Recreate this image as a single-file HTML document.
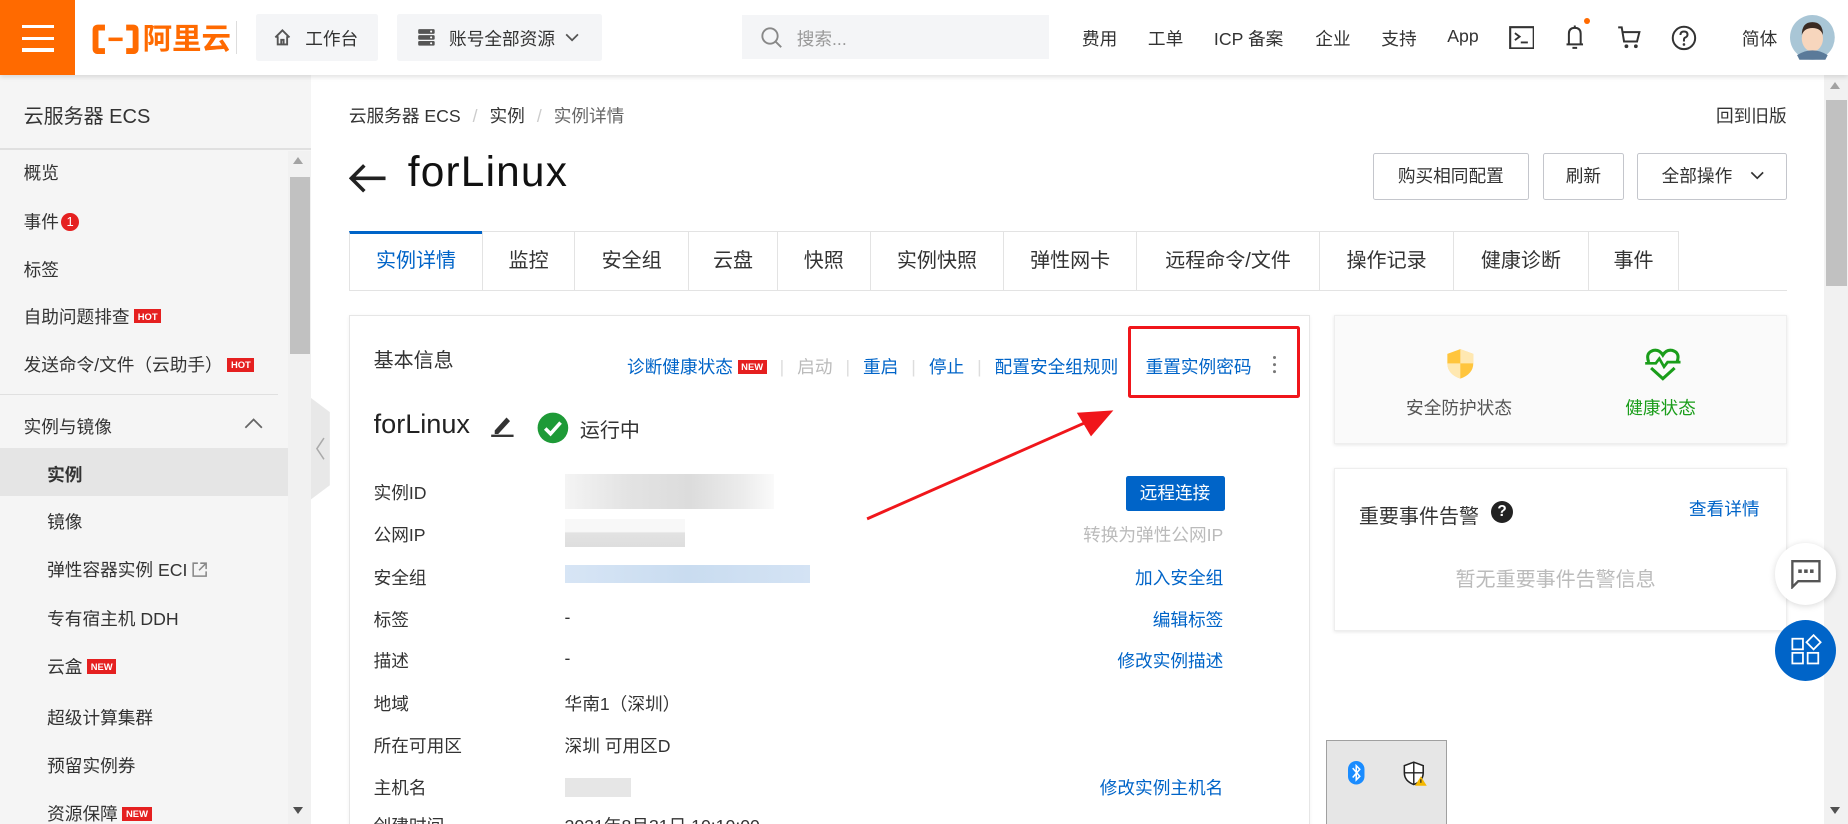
<!DOCTYPE html>
<html><head><meta charset="utf-8"><style>
html,body{margin:0;padding:0;overflow:hidden;background:#fff}
#w{position:relative;width:1568px;height:699px;zoom:1.178571;overflow:hidden;font-family:"Liberation Sans","Noto Sans CJK SC",sans-serif;color:#333;font-size:15px}
.a{position:absolute;white-space:nowrap}
.tab{position:absolute;top:196px;height:50px;border:1px solid #e3e3e3;border-bottom:none;box-sizing:border-box;text-align:center;line-height:50px;font-size:17px;color:#333;background:#fff}
.side{position:absolute;left:20px;font-size:15px;color:#333}
.lab{position:absolute;left:317px;font-size:15px;color:#333}
.rl{position:absolute;right:530px;font-size:15px;color:#0064c8;text-align:right}
.hot{display:inline-block;background:#e52020;color:#fff;font-size:8px;font-weight:bold;padding:1px 3px;vertical-align:3px;margin-left:4px;line-height:10px}
.btn{position:absolute;top:130px;height:40px;border:1px solid #c4c6cc;border-radius:2px;box-sizing:border-box;line-height:38px;text-align:center;font-size:15px;color:#333;background:#fff}
.blur{position:absolute;background:#e8e8e8}
.sep{color:#ddd;margin:0 11px}
</style></head><body><div id="w">
<div class="a" style="left:0;top:0;width:1568px;height:64px;background:#fff;box-shadow:0 2px 4px rgba(0,0,0,.12);z-index:2">
 <div class="a" style="left:0;top:0;width:64px;height:64px;background:#ff6a00">
  <div class="a" style="left:19px;top:21px;width:27px;height:3px;background:#fff"></div>
  <div class="a" style="left:19px;top:31px;width:27px;height:3px;background:#fff"></div>
  <div class="a" style="left:19px;top:41px;width:27px;height:3px;background:#fff"></div>
 </div>
 <svg class="a" style="left:78px;top:20px" width="40" height="26" viewBox="0 0 40 26"><path d="M11 3H5Q3 3 3 5V21Q3 23 5 23H11M29 3H35Q37 3 37 5V21Q37 23 35 23H29" fill="none" stroke="#ff6a00" stroke-width="5"/><rect x="14" y="11.5" width="12" height="3" fill="#ff6a00"/></svg>
 <div class="a" style="left:121px;top:14px;font-size:25px;font-weight:bold;color:#ff6a00">阿里云</div>
 <div class="a" style="left:200px;top:18px;width:1px;height:28px;background:#ddd"></div>
 <div class="a" style="left:217px;top:12px;width:104px;height:40px;background:#f4f5f7;border-radius:2px"></div>
 <svg class="a" style="left:232px;top:24px" width="16" height="16" viewBox="0 0 16 16"><path d="M2 8L8 2L14 8M4 7V14H12V7M7 14V10H9V14" fill="none" stroke="#555" stroke-width="1.6"/></svg>
 <div class="a" style="left:259px;top:22px;font-size:15px;color:#333">工作台</div>
 <div class="a" style="left:337px;top:12px;width:174px;height:40px;background:#f4f5f7;border-radius:2px"></div>
 <svg class="a" style="left:354px;top:24px" width="16" height="16" viewBox="0 0 16 16"><rect x="1" y="1" width="14" height="4" rx="1" fill="#555"/><rect x="1" y="6" width="14" height="4" rx="1" fill="#555"/><rect x="1" y="11" width="14" height="4" rx="1" fill="#555"/><circle cx="12" cy="3" r=".9" fill="#fff"/><circle cx="12" cy="8" r=".9" fill="#fff"/><circle cx="12" cy="13" r=".9" fill="#fff"/></svg>
 <div class="a" style="left:381px;top:22px;font-size:15px;color:#333">账号全部资源</div>
 <svg class="a" style="left:479px;top:27px" width="12" height="10" viewBox="0 0 12 10"><path d="M1 2L6 7L11 2" fill="none" stroke="#555" stroke-width="1.5"/></svg>
 <div class="a" style="left:630px;top:13px;width:260px;height:37px;background:#f4f5f7"></div>
 <svg class="a" style="left:645px;top:22px" width="20" height="20" viewBox="0 0 20 20"><circle cx="8.5" cy="8.5" r="6.5" fill="none" stroke="#888" stroke-width="1.6"/><path d="M13.5 13.5L18 18" stroke="#888" stroke-width="1.6"/></svg>
 <div class="a" style="left:676px;top:22px;font-size:15px;color:#999">搜索...</div>
 <div class="a" style="left:918px;top:22px;font-size:15px">费用</div>
 <div class="a" style="left:974px;top:22px;font-size:15px">工单</div>
 <div class="a" style="left:1030px;top:22px;font-size:15px">ICP 备案</div>
 <div class="a" style="left:1116px;top:22px;font-size:15px">企业</div>
 <div class="a" style="left:1172px;top:22px;font-size:15px">支持</div>
 <div class="a" style="left:1228px;top:22px;font-size:15px">App</div>
 <svg class="a" style="left:1280px;top:22px" width="22" height="20" viewBox="0 0 22 20"><rect x="1" y="1" width="20" height="18" fill="none" stroke="#333" stroke-width="1.8"/><path d="M5 6L9 9L5 12M10 14H16" fill="none" stroke="#333" stroke-width="1.6"/></svg>
 <svg class="a" style="left:1326px;top:19px" width="20" height="24" viewBox="0 0 20 24"><path d="M5 19V10Q5 5 10 5Q15 5 15 10V19ZM3 19H17M10 3V5M8 22H12" fill="none" stroke="#333" stroke-width="1.7"/></svg>
 <div class="a" style="left:1344px;top:15px;width:5px;height:5px;border-radius:50%;background:#ff6a00"></div>
 <svg class="a" style="left:1372px;top:21px" width="22" height="22" viewBox="0 0 22 22"><path d="M1 2H4L6 14H17L19 6H5" fill="none" stroke="#333" stroke-width="1.7"/><circle cx="8" cy="18" r="1.6" fill="#333"/><circle cx="16" cy="18" r="1.6" fill="#333"/></svg>
 <svg class="a" style="left:1418px;top:21px" width="22" height="22" viewBox="0 0 22 22"><circle cx="11" cy="11" r="9.5" fill="none" stroke="#333" stroke-width="1.7"/><path d="M8 8.5Q8 5.5 11 5.5Q14 5.5 14 8.2Q14 10 11.5 11Q11 11.3 11 13V14" fill="none" stroke="#333" stroke-width="1.7"/><circle cx="11" cy="16.5" r="1.1" fill="#333"/></svg>
 <div class="a" style="left:1478px;top:22px;font-size:15px">简体</div>
 <svg class="a" style="left:1519px;top:13px" width="38" height="38" viewBox="0 0 38 38"><circle cx="19" cy="19" r="19" fill="#a9c6d6"/><ellipse cx="19" cy="20" rx="9" ry="11" fill="#f7d6bd"/><path d="M10 17Q10 6 19 6Q28 6 28 17Q26 11 19 11Q12 11 10 17Z" fill="#3a2a22"/><path d="M6 34Q19 26 32 34L30 38H8Z" fill="#5a7a99"/></svg>
</div>
<div class="a" style="left:0;top:64px;width:264px;height:635px;background:#f5f5f5"></div>
<div class="a" style="left:20px;top:85px;font-size:17px;color:#333">云服务器 ECS</div>
<div class="a" style="left:0;top:126px;width:264px;height:1px;background:#e0e0e0"></div>
<div class="a" style="left:244px;top:128px;width:20px;height:571px;background:#f1f1f1"></div>
<div class="a" style="left:246px;top:150px;width:17px;height:150px;background:#c1c1c1"></div>
<div class="a" style="left:249px;top:133px;width:0;height:0;border:5px solid transparent;border-bottom:6px solid #a3a3a3;border-top:none"></div>
<div class="a" style="left:249px;top:685px;width:0;height:0;border:5px solid transparent;border-top:6px solid #505050;border-bottom:none"></div>
<div class="side" style="top:136px">概览</div>
<div class="side" style="top:177px">事件<span style="display:inline-block;width:15px;height:15px;border-radius:50%;background:#e52020;color:#fff;font-size:11px;text-align:center;line-height:15px;margin-left:2px;vertical-align:1px">1</span></div>
<div class="side" style="top:218px">标签</div>
<div class="side" style="top:258px">自助问题排查<span class="hot">HOT</span></div>
<div class="side" style="top:299px">发送命令/文件（云助手）<span class="hot">HOT</span></div>
<div class="a" style="left:0;top:334px;width:236px;height:1px;background:#e0e0e0"></div>
<div class="side" style="top:351px">实例与镜像</div>
<svg class="a" style="left:206px;top:353px" width="18" height="12" viewBox="0 0 18 12"><path d="M2 10L9 3L16 10" fill="none" stroke="#666" stroke-width="1.5"/></svg>
<div class="a" style="left:0;top:380px;width:244px;height:41px;background:#e5e5e5"></div>
<div class="side" style="top:392px;left:40px;font-weight:bold">实例</div>
<div class="side" style="top:432px;left:40px">镜像</div>
<div class="side" style="top:473px;left:40px">弹性容器实例 ECI <svg width="13" height="13" viewBox="0 0 13 13" style="vertical-align:-1px"><path d="M5 1H1V12H12V8M7 1H12V6M12 1L6 7" fill="none" stroke="#888" stroke-width="1.3"/></svg></div>
<div class="side" style="top:514px;left:40px">专有宿主机 DDH</div>
<div class="side" style="top:555px;left:40px">云盒<span class="hot">NEW</span></div>
<div class="side" style="top:598px;left:40px">超级计算集群</div>
<div class="side" style="top:639px;left:40px">预留实例券</div>
<div class="side" style="top:680px;left:40px">资源保障<span class="hot">NEW</span></div>
<svg class="a" style="left:264px;top:338px" width="18" height="86" viewBox="0 0 18 86"><path d="M0 0L16 12V74L0 86Z" fill="#e8e8e8"/><path d="M11 34L5 43L11 52" fill="none" stroke="#aaa" stroke-width="1.3"/></svg>
<div class="a" style="left:296px;top:87px;font-size:15px;color:#333">云服务器 ECS <span style="color:#ccc;margin:0 6px">/</span> 实例 <span style="color:#ccc;margin:0 6px">/</span> <span style="color:#666">实例详情</span></div>
<div class="a" style="left:1456px;top:87px;font-size:15px;color:#333">回到旧版</div>
<svg class="a" style="left:296px;top:138px" width="32" height="26" viewBox="0 0 32 26"><path d="M13 2L2 13L13 24M2 13H31" fill="none" stroke="#222" stroke-width="3"/></svg>
<div class="a" style="left:346px;top:126px;font-size:36px;color:#111;letter-spacing:1px">forLinux</div>
<div class="btn" style="left:1165px;width:132px">购买相同配置</div>
<div class="btn" style="left:1309px;width:69px">刷新</div>
<div class="btn" style="left:1389px;width:127px;text-align:left;padding-left:20px">全部操作 <svg width="14" height="10" viewBox="0 0 14 10" style="margin-left:10px"><path d="M2 2L7 7L12 2" fill="none" stroke="#333" stroke-width="1.4"/></svg></div>
<div class="a" style="left:296px;top:246px;width:1220px;height:1px;background:#e3e3e3"></div>
<div class="tab" style="left:296px;width:114px;color:#0064c8;border-top:3px solid #0064c8;line-height:46px">实例详情</div>
<div class="tab" style="left:409px;width:79px">监控</div>
<div class="tab" style="left:487px;width:98px">安全组</div>
<div class="tab" style="left:584px;width:76px">云盘</div>
<div class="tab" style="left:659px;width:80px">快照</div>
<div class="tab" style="left:738px;width:114px">实例快照</div>
<div class="tab" style="left:851px;width:114px">弹性网卡</div>
<div class="tab" style="left:964px;width:156px">远程命令/文件</div>
<div class="tab" style="left:1119px;width:115px">操作记录</div>
<div class="tab" style="left:1233px;width:115px">健康诊断</div>
<div class="tab" style="left:1347px;width:78px">事件</div>
<div class="a" style="left:296px;top:267px;width:814px;height:450px;border:1px solid #e6e6e6;box-shadow:0 1px 3px rgba(0,0,0,.06)"></div>
<div class="a" style="left:317px;top:292px;font-size:17px">基本信息</div>
<div class="a" style="left:532px;top:300px;font-size:15px;color:#0064c8">诊断健康状态<span class="hot" style="font-size:8px;vertical-align:2px">NEW</span><span class="sep">|</span><span style="color:#bbb">启动</span><span class="sep">|</span>重启<span class="sep">|</span>停止<span class="sep">|</span>配置安全组规则</div>
<div class="a" style="left:972px;top:300px;font-size:15px;color:#0064c8">重置实例密码</div>
<div class="a" style="left:1080px;top:302px;width:3px;height:3px;border-radius:50%;background:#777;box-shadow:0 6px 0 #777,0 12px 0 #777"></div>
<div class="a" style="left:957px;top:277px;width:141px;height:56px;border:3px solid #f0161b;border-radius:2px"></div>
<div class="a" style="left:317px;top:346px;font-size:23px;color:#222">forLinux</div>
<svg class="a" style="left:416px;top:351px" width="22" height="20" viewBox="0 0 22 20"><path d="M4 14L14 3L17 6L7 17H4Z" fill="#333"/><rect x="1" y="17.5" width="19" height="2" fill="#333"/></svg>
<svg class="a" style="left:456px;top:350px" width="27" height="27" viewBox="0 0 27 27"><circle cx="13.5" cy="13.5" r="13" fill="#1e9a37"/><path d="M7 14L11.5 18.5L20 9" fill="none" stroke="#fff" stroke-width="3"/></svg>
<div class="a" style="left:492px;top:351px;font-size:17px">运行中</div>
<div class="lab" style="top:407px">实例ID</div>
<div class="lab" style="top:443px">公网IP</div>
<div class="lab" style="top:479px">安全组</div>
<div class="lab" style="top:515px">标签</div>
<div class="lab" style="top:550px">描述</div>
<div class="lab" style="top:586px">地域</div>
<div class="lab" style="top:622px">所在可用区</div>
<div class="lab" style="top:658px">主机名</div>
<div class="lab" style="top:690px">创建时间</div>
<div class="blur" style="left:479px;top:402px;width:178px;height:30px;background:linear-gradient(90deg,#f4f4f4,#e3e3e3 30%,#dcdcdc 60%,#ececec 85%,#fafafa)"></div>
<div class="blur" style="left:479px;top:440px;width:102px;height:24px;background:linear-gradient(180deg,#f8f8f8 45%,#e2e2e2 50%,#dedede)"></div>
<div class="blur" style="left:479px;top:479px;width:208px;height:16px;background:linear-gradient(90deg,#d7e5f5,#c9dcf0 50%,#d4e3f4)"></div>
<div class="blur" style="left:479px;top:660px;width:56px;height:16px;background:#e6e6e6"></div>
<div class="a" style="left:479px;top:515px">-</div>
<div class="a" style="left:479px;top:550px">-</div>
<div class="a" style="left:479px;top:586px">华南1（深圳）</div>
<div class="a" style="left:479px;top:622px">深圳 可用区D</div>
<div class="a" style="left:479px;top:690px">2021年8月31日 10:10:00</div>
<div class="a" style="left:955px;top:404px;width:84px;height:30px;background:#0064c8;border-radius:2px;color:#fff;text-align:center;line-height:30px;font-size:15px">远程连接</div>
<div class="rl" style="top:443px;color:#bbb">转换为弹性公网IP</div>
<div class="rl" style="top:479px">加入安全组</div>
<div class="rl" style="top:515px">编辑标签</div>
<div class="rl" style="top:550px">修改实例描述</div>
<div class="rl" style="top:658px">修改实例主机名</div>
<svg class="a" style="left:730px;top:340px" width="220" height="105" viewBox="0 0 220 105"><path d="M6 100L192 18" stroke="#f0161b" stroke-width="2.5"/><path d="M215 8L184 10L196 30Z" fill="#f0161b"/></svg>
<div class="a" style="left:1132px;top:267px;width:384px;height:110px;background:#fafafa;border:1px solid #eee;box-sizing:border-box;box-shadow:0 1px 3px rgba(0,0,0,.1)"></div>
<svg class="a" style="left:1226px;top:295px" width="26" height="27" viewBox="0 0 26 27"><path d="M13 1L24 5V13Q24 22 13 26Q2 22 2 13V5Z" fill="#ffc53d"/><path d="M13 1V13H24V5Z M13 13V26Q2 22 2 13Z" fill="#fff" opacity=".6"/></svg>
<div class="a" style="left:1193px;top:335px;font-size:15px;color:#555">安全防护状态</div>
<svg class="a" style="left:1395px;top:295px" width="32" height="28" viewBox="0 0 32 28"><path d="M4 12Q1 4 8 2Q13 1 16 6Q19 1 24 2Q31 4 28 12M6 17L16 26L26 17" fill="none" stroke="#1a9d1a" stroke-width="2.6"/><path d="M1 13H10L13 9L17 16L20 12H31" fill="none" stroke="#1a9d1a" stroke-width="2.3"/></svg>
<div class="a" style="left:1379px;top:335px;font-size:15px;color:#1a9d1a">健康状态</div>
<div class="a" style="left:1132px;top:397px;width:384px;height:138px;background:#fff;border:1px solid #eee;box-sizing:border-box;box-shadow:0 1px 3px rgba(0,0,0,.1)"></div>
<div class="a" style="left:1153px;top:424px;font-size:17px;color:#333">重要事件告警</div>
<div class="a" style="left:1265px;top:425px;width:19px;height:19px;border-radius:50%;background:#222;color:#fff;font-size:13px;font-weight:bold;text-align:center;line-height:19px">?</div>
<div class="a" style="left:1433px;top:421px;font-size:15px;color:#0064c8">查看详情</div>
<div class="a" style="left:1235px;top:478px;font-size:17px;color:#bbb">暂无重要事件告警信息</div>
<div class="a" style="left:1548px;top:64px;width:20px;height:635px;background:#f1f1f1"></div>
<div class="a" style="left:1549px;top:85px;width:18px;height:158px;background:#c1c1c1"></div>
<div class="a" style="left:1553px;top:70px;width:0;height:0;border:5px solid transparent;border-bottom:6px solid #a3a3a3;border-top:none"></div>
<div class="a" style="left:1553px;top:685px;width:0;height:0;border:5px solid transparent;border-top:6px solid #505050;border-bottom:none"></div>
<div class="a" style="left:1506px;top:461px;width:52px;height:52px;border-radius:50%;background:#fff;box-shadow:0 1px 6px rgba(0,0,0,.15)"></div>
<svg class="a" style="left:1519px;top:475px" width="26" height="25" viewBox="0 0 26 25"><path d="M1 1H25V18H7L2 23V1Z" fill="none" stroke="#555" stroke-width="2"/><rect x="7" y="8" width="3" height="3" fill="#555"/><rect x="12" y="8" width="3" height="3" fill="#555"/><rect x="17" y="8" width="3" height="3" fill="#555"/></svg>
<div class="a" style="left:1506px;top:526px;width:52px;height:52px;border-radius:50%;background:#0064c8"></div>
<svg class="a" style="left:1519px;top:538px" width="28" height="26" viewBox="0 0 28 26"><rect x="2" y="4" width="9" height="9" fill="none" stroke="#fff" stroke-width="1.5"/><rect x="2" y="16" width="9" height="9" fill="none" stroke="#fff" stroke-width="1.5"/><rect x="15" y="16" width="9" height="9" fill="none" stroke="#fff" stroke-width="1.5"/><path d="M20 1L26 7L20 13L14 7Z" fill="none" stroke="#fff" stroke-width="1.5"/></svg>
<div class="a" style="left:1125px;top:628px;width:103px;height:75px;background:#e6e6e6;border:1px solid #a0a0a0;box-sizing:border-box"></div>
<svg class="a" style="left:1144px;top:646px" width="14" height="20" viewBox="0 0 14 20"><rect x="0" y="0" width="14" height="20" rx="7" fill="#1a8cff"/><path d="M4 6L10 13L7 16V4L10 7L4 14" fill="none" stroke="#fff" stroke-width="1.3"/></svg>
<svg class="a" style="left:1190px;top:646px" width="22" height="22" viewBox="0 0 22 22"><path d="M10 1L18 4V10Q18 17 10 20Q2 17 2 10V4Z" fill="#fff" stroke="#222" stroke-width="1.3"/><path d="M10 1V20M2 10H18" stroke="#222" stroke-width="1.2"/><path d="M16 13L21 21H11Z" fill="#f5b800"/><rect x="15.5" y="15.5" width="1" height="3" fill="#222"/></svg>
</div></body></html>
